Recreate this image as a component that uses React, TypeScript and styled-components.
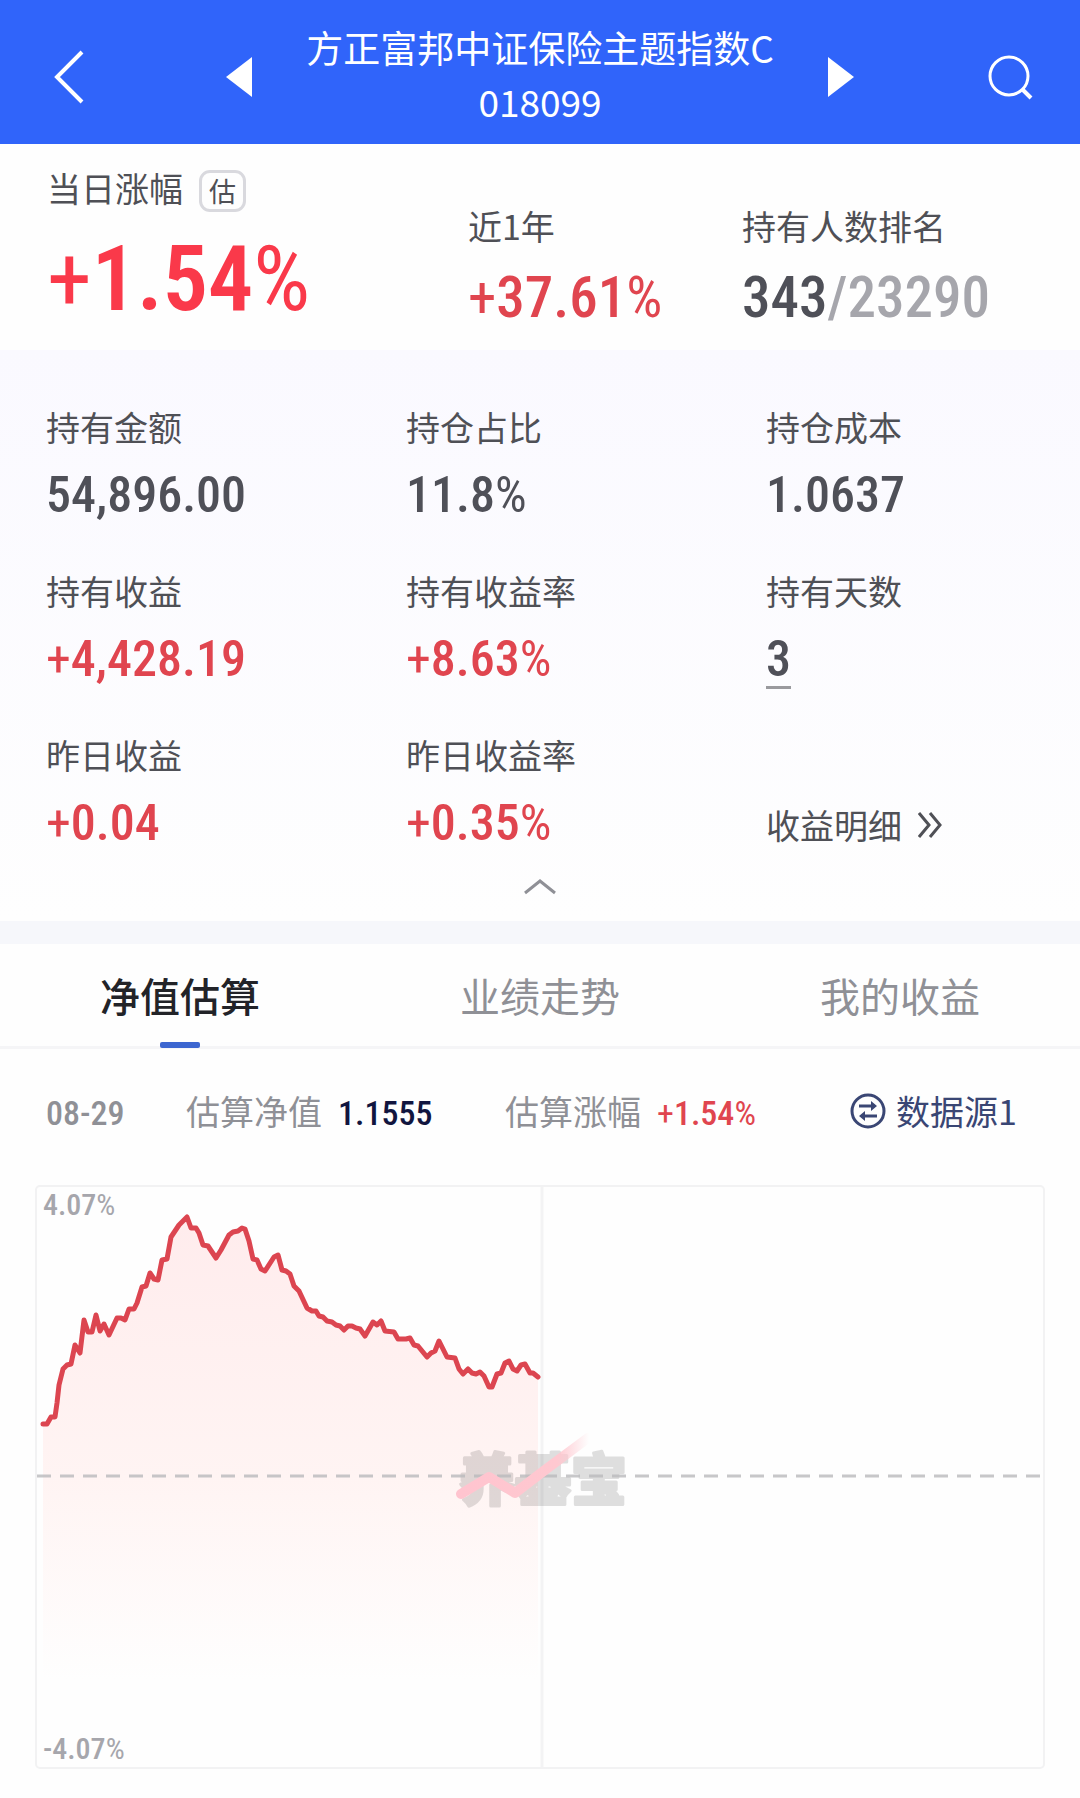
import React from "react";
import styled, { createGlobalStyle } from "styled-components";

const GlobalStyle = createGlobalStyle`
  *, *::before, *::after { box-sizing: border-box; }
  body {
    margin: 0;
    background: #fefefe;
    color: #4f5056;
    font-family: "Noto Sans CJK SC", sans-serif;
  }
  button {
    border: 0;
    padding: 0;
    margin: 0;
    background: none;
    color: inherit;
    font: inherit;
    cursor: pointer;
  }
  a { color: inherit; text-decoration: none; }
  svg { display: block; }
  h1, dl, dd, dt, p { margin: 0; font-weight: 400; }
`;

const colors = {
  blue: "#3064fa",
  red: "#e0454f",
  strongRed: "#fa394a",
  ink: "#4f5058",
  grey: "#8f9096",
  lightGrey: "#a6a6ac",
  navy: "#11153f",
  slate: "#3a4674",
};

const numeric = `"Roboto Condensed", Roboto, "Noto Sans CJK SC", sans-serif`;

/* Header */

const Header = styled.header`
  display: flex;
  align-items: center;
  justify-content: space-between;
  padding: 20px 46px 16px;
  background: ${colors.blue};
  color: #fff;
`;

const FundSwitcher = styled.div`
  display: flex;
  align-items: center;
  gap: 54px;
`;

const FundTitle = styled.h1`
  font-size: 37px;
  line-height: 54px;
  text-align: center;
`;

const FundCode = styled.span`
  display: block;
`;

const IconButton = styled.button`
  display: flex;
  align-items: center;
  justify-content: center;
  padding-top: 6px;
`;

/* Summary */

const Summary = styled.dl`
  display: grid;
  grid-template-columns: 421fr 274fr 291fr;
  align-items: end;
  padding: 20px 47px 22px;
  background: #fefefe;
`;

const Label = styled.dt`
  display: flex;
  align-items: flex-end;
  gap: 16px;
  font-size: 34px;
  line-height: 48px;
  white-space: nowrap;
`;

const Badge = styled.span`
  padding: 0 7px;
  border: 3px solid #d9d9de;
  border-radius: 11px;
  font-size: 27px;
  line-height: 36px;
`;

type Tone = "ink" | "red" | "strongRed";

const Value = styled.dd<{ $tone?: Tone; $size?: number }>`
  font-family: ${numeric};
  font-weight: 500;
  font-size: ${(p) => p.$size ?? 50}px;
  line-height: 60px;
  color: ${(p) => colors[p.$tone ?? "ink"]};
  white-space: nowrap;
`;

const HeroValue = styled(Value)`
  font-weight: 600;
  line-height: 96px;
`;

const Metric = styled.div<{ $gap?: number }>`
  display: flex;
  flex-direction: column;
  align-items: flex-start;
  gap: ${(p) => p.$gap ?? 14}px;
`;

const Muted = styled.span`
  color: ${colors.lightGrey};
`;

const Symbol = styled.span`
  font-weight: 400;
`;

/* Holdings */

const Holdings = styled.section`
  padding-top: 53px;
  background: linear-gradient(#faf9ff, #fefefe);
`;

const HoldingGrid = styled.dl`
  display: grid;
  grid-template-columns: repeat(3, 1fr);
  row-gap: 42px;
  margin-left: 46px;
  margin-right: -46px;
`;

const Days = styled(Value)`
  height: 60px;
  border-bottom: 3px solid #9a9a9e;
`;

const DetailLink = styled.a`
  display: flex;
  align-items: center;
  align-self: end;
  gap: 16px;
  font-size: 34px;
  line-height: 56px;
`;

const Collapse = styled.button`
  display: flex;
  align-items: center;
  justify-content: center;
  width: 100%;
  height: 68px;
`;

/* Tabs */

const Tabs = styled.nav`
  display: grid;
  grid-template-columns: repeat(3, 1fr);
  border-top: 23px solid #f6f7fb;
  border-bottom: 3px solid #f5f5f7;
`;

const Tab = styled.button<{ $active?: boolean }>`
  position: relative;
  height: 102px;
  font-size: 40px;
  font-weight: ${(p) => (p.$active ? 500 : 400)};
  color: ${(p) => (p.$active ? "#222328" : colors.grey)};

  &::after {
    content: "";
    display: ${(p) => (p.$active ? "block" : "none")};
    position: absolute;
    left: calc(50% - 20px);
    bottom: -2px;
    width: 40px;
    height: 6px;
    border-radius: 2px;
    background: #3c66d0;
  }
`;

/* Estimate row */

const Estimate = styled.div`
  display: grid;
  grid-template-columns: 140fr 319fr 345fr 184fr;
  align-items: center;
  height: 124px;
  padding: 0 46px;
  font-size: 34px;
  line-height: 48px;
  color: ${colors.grey};
  white-space: nowrap;
`;

const EstimateItem = styled.div`
  display: flex;
  align-items: center;
  gap: 16px;
`;

const EstimateValue = styled.span<{ $color: string }>`
  padding-top: 3px;
  font-family: ${numeric};
  font-size: 34px;
  font-weight: 500;
  color: ${(p) => p.$color};
`;

const SourceButton = styled.button`
  display: flex;
  align-items: center;
  gap: 10px;
  color: ${colors.slate};
`;

/* Chart */

const ChartFrame = styled.figure`
  position: relative;
  margin: 12px 35px 28px;
  border: 2px solid #f2f2f3;
  border-radius: 5px;

  > svg {
    width: 100%;
    height: auto;
  }
`;

const AxisLabel = styled.span<{ $edge: "top" | "bottom" }>`
  position: absolute;
  left: 6px;
  ${(p) => p.$edge}: 0;
  font-family: ${numeric};
  font-size: 30px;
  font-weight: 500;
  line-height: 36px;
  color: ${colors.lightGrey};
`;

const points: [number, number][] = [
  [6, 237], [10, 237], [14, 230], [18, 230], [20, 216], [22, 198], [26, 182],
  [30, 178], [34, 177], [38, 158], [43, 166], [47, 133], [51, 145], [55, 145],
  [59, 128], [63, 144], [67, 137], [72, 148], [80, 131], [84, 131], [88, 133],
  [92, 122], [97, 122], [100, 116], [105, 100], [109, 99], [113, 86], [117, 92],
  [121, 93], [125, 73], [130, 72], [134, 50], [138, 44], [142, 38], [150, 30],
  [154, 41], [159, 41], [162, 46], [166, 58], [171, 59], [179, 71], [184, 63],
  [192, 48], [196, 45], [201, 44], [205, 41], [208, 42], [212, 54], [216, 72],
  [220, 73], [224, 82], [228, 84], [237, 70], [241, 68], [245, 83], [249, 84],
  [253, 87], [257, 99], [262, 104], [270, 121], [275, 124], [279, 124],
  [282, 129], [286, 130], [290, 134], [295, 135], [299, 138], [303, 139],
  [307, 143], [311, 139], [315, 139], [319, 141], [323, 142], [328, 149],
  [336, 135], [340, 138], [344, 134], [348, 144], [357, 145], [361, 152],
  [369, 152], [373, 151], [377, 158], [381, 159], [390, 170], [394, 166],
  [398, 164], [402, 154], [410, 170], [418, 171], [422, 182], [426, 187],
  [431, 182], [435, 186], [439, 187], [443, 185], [447, 189], [452, 200],
  [455, 200], [460, 187], [464, 186], [468, 176], [472, 174], [476, 182],
  [480, 184], [484, 178], [488, 177], [493, 186], [496, 186], [501, 190],
];

const line = points.map(([x, y]) => `${x},${y}`).join(" ");
const area = `6,580 ${line} 501,580`;

function Chart() {
  return (
    <ChartFrame>
      <svg viewBox="0 0 1006 580" role="img" aria-label="净值估算">
        <defs>
          <linearGradient id="fill" x1="0" y1="0" x2="0" y2="580" gradientUnits="userSpaceOnUse">
            <stop offset="0" stopColor="#ffebec" />
            <stop offset="0.5" stopColor="#fff4f3" />
            <stop offset="0.85" stopColor="#fefefe" />
          </linearGradient>
          <linearGradient id="stroke" x1="422" y1="0" x2="552" y2="0" gradientUnits="userSpaceOnUse">
            <stop offset="0" stopColor="#ffc4cf" />
            <stop offset="0.75" stopColor="#ffc8d0" />
            <stop offset="1" stopColor="#ffc8d0" stopOpacity="0" />
          </linearGradient>
        </defs>
        <polygon points={area} fill="url(#fill)" />
        <path d="M505 0V580" stroke="#f3f3f4" strokeWidth="3" />
        <text
          x="422"
          y="313"
          fontSize="56"
          fontWeight="900"
          fill="#000"
          stroke="#000"
          strokeWidth="3"
          strokeLinejoin="round"
          opacity="0.12"
        >
          养基宝
        </text>
        <path d="M0 289H1006" stroke="#b9b9bb" strokeOpacity="0.8" strokeWidth="3" strokeDasharray="14 9" />
        <path
          d="M424 307L452 290L478 306L508 283L551 251"
          fill="none"
          stroke="url(#stroke)"
          strokeWidth="10"
          strokeLinejoin="round"
          strokeLinecap="round"
        />
        <polyline
          points={line}
          fill="none"
          stroke="#dc4550"
          strokeWidth="5"
          strokeLinejoin="round"
          strokeLinecap="round"
        />
      </svg>
      <AxisLabel $edge="top">4.07<Symbol>%</Symbol></AxisLabel>
      <AxisLabel $edge="bottom">-4.07<Symbol>%</Symbol></AxisLabel>
    </ChartFrame>
  );
}

function SwapIcon() {
  return (
    <svg width="36" height="36" viewBox="0 0 36 36" fill="none" stroke="currentColor" strokeWidth="3">
      <circle cx="18" cy="18" r="16" />
      <path d="M9 13H23M27 23H13" />
      <path d="M21 8L27 13L21 18ZM15 18L9 23L15 28Z" fill="currentColor" stroke="none" />
    </svg>
  );
}

type Holding = { label: string; value: string; gain?: boolean; percent?: boolean; days?: boolean };

const holdings: Holding[] = [
  { label: "持有金额", value: "54,896.00" },
  { label: "持仓占比", value: "11.8", percent: true },
  { label: "持仓成本", value: "1.0637" },
  { label: "持有收益", value: "4,428.19", gain: true },
  { label: "持有收益率", value: "8.63", gain: true, percent: true },
  { label: "持有天数", value: "3", days: true },
  { label: "昨日收益", value: "0.04", gain: true },
  { label: "昨日收益率", value: "0.35", gain: true, percent: true },
];

export default function App() {
  return (
    <>
      <GlobalStyle />
      <Header>
        <IconButton aria-label="返回">
          <svg width="46" height="54" viewBox="0 0 46 54" fill="none" stroke="#fff" strokeWidth="4">
            <path d="M36 2L11 27L36 52" />
          </svg>
        </IconButton>
        <FundSwitcher>
          <IconButton aria-label="上一个">
            <svg width="26" height="40" viewBox="0 0 26 40" fill="#fff">
              <path d="M0 20L26 0V40Z" />
            </svg>
          </IconButton>
          <FundTitle>
            方正富邦中证保险主题指数C
            <FundCode>018099</FundCode>
          </FundTitle>
          <IconButton aria-label="下一个">
            <svg width="26" height="40" viewBox="0 0 26 40" fill="#fff">
              <path d="M26 20L0 0V40Z" />
            </svg>
          </IconButton>
        </FundSwitcher>
        <IconButton aria-label="搜索">
          <svg width="46" height="46" viewBox="0 0 46 46" fill="none" stroke="#fff" strokeWidth="3">
            <circle cx="21" cy="22" r="19" />
            <path d="M34 35L43 44" strokeWidth="4" />
          </svg>
        </IconButton>
      </Header>

      <main>
        <Summary>
          <Metric $gap={20}>
            <Label>
              当日涨幅 <Badge>估</Badge>
            </Label>
            <HeroValue $tone="strongRed" $size={90}>
              <Symbol>+</Symbol>1.54<Symbol>%</Symbol>
            </HeroValue>
          </Metric>
          <Metric $gap={18}>
            <Label>近1年</Label>
            <Value $tone="red" $size={57}>
              <Symbol>+</Symbol>37.61<Symbol>%</Symbol>
            </Value>
          </Metric>
          <Metric $gap={18}>
            <Label>持有人数排名</Label>
            <Value $size={57}>
              343<Muted>/23290</Muted>
            </Value>
          </Metric>
        </Summary>

        <Holdings>
          <HoldingGrid>
            {holdings.map((h) => (
              <Metric key={h.label}>
                <Label>{h.label}</Label>
                {h.days ? (
                  <Days>{h.value}</Days>
                ) : (
                  <Value $tone={h.gain ? "red" : "ink"}>
                    {h.gain && <Symbol>+</Symbol>}
                    {h.value}
                    {h.percent && <Symbol>%</Symbol>}
                  </Value>
                )}
              </Metric>
            ))}
            <DetailLink href="#details">
              收益明细
              <svg width="24" height="26" viewBox="0 0 24 26" fill="none" stroke="currentColor" strokeWidth="3">
                <path d="M1 1L11 13L1 25M12 1L22 13L12 25" />
              </svg>
            </DetailLink>
          </HoldingGrid>
          <Collapse aria-label="收起">
            <svg width="34" height="16" viewBox="0 0 34 16" fill="none" stroke="#8f9096" strokeWidth="3">
              <path d="M2 14L17 2L32 14" />
            </svg>
          </Collapse>
        </Holdings>

        <Tabs>
          <Tab $active>净值估算</Tab>
          <Tab>业绩走势</Tab>
          <Tab>我的收益</Tab>
        </Tabs>

        <Estimate>
          <EstimateValue $color={colors.grey}>08-29</EstimateValue>
          <EstimateItem>
            估算净值
            <EstimateValue $color={colors.navy}>1.1555</EstimateValue>
          </EstimateItem>
          <EstimateItem>
            估算涨幅
            <EstimateValue $color={colors.red}>
              <Symbol>+</Symbol>1.54<Symbol>%</Symbol>
            </EstimateValue>
          </EstimateItem>
          <SourceButton>
            <SwapIcon />
            数据源1
          </SourceButton>
        </Estimate>

        <Chart />
      </main>
    </>
  );
}
